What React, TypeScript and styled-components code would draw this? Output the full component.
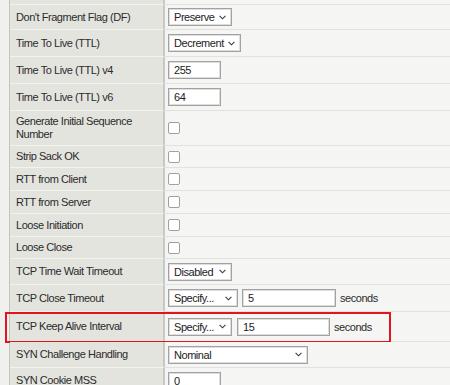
import React from "react";
import styled, { createGlobalStyle } from "styled-components";

const Global = createGlobalStyle`
  *, *::before, *::after { box-sizing: border-box; }
  html, body { margin: 0; padding: 0; background: #f5f5f3; }
  body {
    width: 450px;
    height: 385px;
    overflow: hidden;
    font-family: "Liberation Sans", Arial, sans-serif;
  }
`;

const Page = styled.div`
  display: flex;
  width: 450px;
  height: 385px;
  overflow: hidden;
  background: #f5f5f3;
`;

const Gutter = styled.div`
  flex: none;
  width: 10px;
  background: #f0f0ee;
  border-right: 1px solid #c6c6c1;
`;

const Table = styled.div`
  flex: 1;
  display: flex;
  flex-direction: column;
`;

const Row = styled.div<{ $h: number }>`
  position: relative;
  flex: none;
  display: grid;
  grid-template-columns: 155px 1fr;
  height: ${(p) => p.$h}px;
`;

const Label = styled.div`
  display: flex;
  align-items: center;
  padding: 0 8px 0 6px;
  background: #e4e4df;
  border-bottom: 1px solid #f2f2ef;
  border-right: 2px solid #c9c9c4;
  color: #2b2b2b;
  font-size: 11px;
  line-height: 13px;
  letter-spacing: -0.45px;
`;

const Value = styled.div`
  display: flex;
  align-items: center;
  gap: 4px;
  padding-left: 3px;
  background: #f5f5f3;
  border-bottom: 1px solid #e1e1dd;
  color: #2b2b2b;
  font-size: 11px;
  letter-spacing: -0.45px;
`;

const SelectBox = styled.div<{ $w: number }>`
  display: flex;
  align-items: center;
  justify-content: space-between;
  width: ${(p) => p.$w}px;
  height: 18px;
  padding: 0 5px 0 5px;
  background: #ffffff;
  border: 1px solid #a2a2a2;
  box-shadow: inset 0 0 0 1px #dedede;
  color: #222;
  font-size: 11px;
  letter-spacing: -0.45px;
`;

const TextBox = styled.input<{ $w: number }>`
  width: ${(p) => p.$w}px;
  height: 18px;
  margin: 0;
  padding: 0 5px;
  background: #ffffff;
  border: 1px solid #a2a2a2;
  box-shadow: inset 0 0 0 1px #dedede;
  color: #222;
  font-family: "Liberation Sans", Arial, sans-serif;
  font-size: 11px;
  letter-spacing: -0.45px;
  outline: none;
`;

const Check = styled.input`
  appearance: none;
  width: 12px;
  height: 12px;
  margin: 0 0 0 0;
  background: #ffffff;
  border: 1px solid #a0a0a0;
  border-radius: 2px;
`;

const Unit = styled.span`
  color: #2b2b2b;
`;

const Highlight = styled.div`
  position: absolute;
  top: 0;
  left: -5px;
  width: 386px;
  height: 31px;
  border: 2px solid #e3141d;
  pointer-events: none;
`;

const Chevron = () => (
  <svg width="7" height="5" viewBox="0 0 7 5">
    <polyline points="0.6,0.8 3.5,3.8 6.4,0.8" fill="none" stroke="#3a3a3a" strokeWidth="1.1" />
  </svg>
);

const Select = ({ w, text }: { w: number; text: string }) => (
  <SelectBox $w={w}>
    <span>{text}</span>
    <Chevron />
  </SelectBox>
);

type RowSpec = {
  label: string;
  h: number;
  content: React.ReactNode;
  highlight?: boolean;
};

const rows: RowSpec[] = [
  { label: "", h: 5, content: null },
  { label: "Don't Fragment Flag (DF)", h: 25, content: <Select w={64} text="Preserve" /> },
  { label: "Time To Live (TTL)", h: 27, content: <Select w={73} text="Decrement" /> },
  { label: "Time To Live (TTL) v4", h: 27, content: <TextBox $w={53} value="255" readOnly /> },
  { label: "Time To Live (TTL) v6", h: 27, content: <TextBox $w={53} value="64" readOnly /> },
  { label: "Generate Initial Sequence Number", h: 35, content: <Check type="checkbox" /> },
  { label: "Strip Sack OK", h: 22, content: <Check type="checkbox" /> },
  { label: "RTT from Client", h: 23, content: <Check type="checkbox" /> },
  { label: "RTT from Server", h: 23, content: <Check type="checkbox" /> },
  { label: "Loose Initiation", h: 23, content: <Check type="checkbox" /> },
  { label: "Loose Close", h: 22, content: <Check type="checkbox" /> },
  { label: "TCP Time Wait Timeout", h: 26, content: <Select w={64} text="Disabled" /> },
  {
    label: "TCP Close Timeout",
    h: 27,
    content: (
      <>
        <Select w={70} text="Specify..." />
        <TextBox $w={94} value="5" readOnly />
        <Unit>seconds</Unit>
      </>
    ),
  },
  {
    label: "TCP Keep Alive Interval",
    h: 30,
    highlight: true,
    content: (
      <>
        <Select w={64} text="Specify..." />
        <TextBox $w={93} value="15" readOnly style={{ marginLeft: 1 }} />
        <Unit>seconds</Unit>
      </>
    ),
  },
  { label: "SYN Challenge Handling", h: 26, content: <Select w={140} text="Nominal" /> },
  { label: "SYN Cookie MSS", h: 26, content: <TextBox $w={53} value="0" readOnly /> },
];

export default function App() {
  return (
    <>
      <Global />
      <Page>
        <Gutter />
        <Table>
          {rows.map((r, i) => (
            <Row key={i} $h={r.h}>
              <Label>{r.label}</Label>
              <Value>{r.content}</Value>
              {r.highlight && <Highlight />}
            </Row>
          ))}
        </Table>
      </Page>
    </>
  );
}
